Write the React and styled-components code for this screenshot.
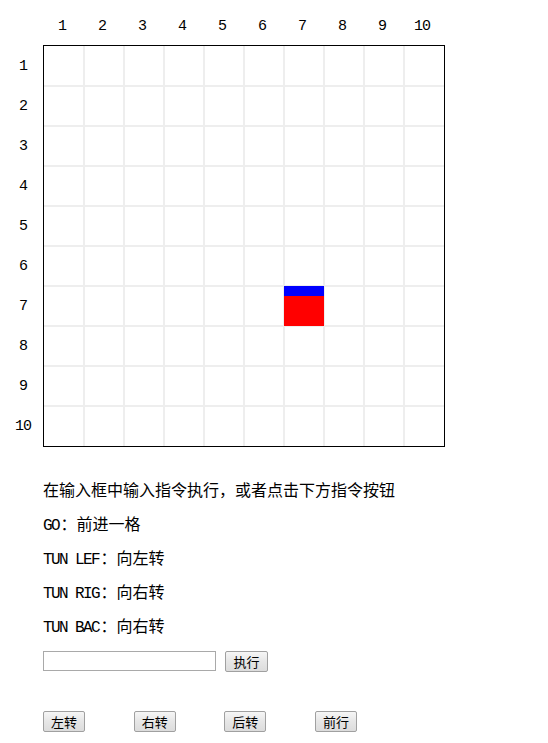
import React from "react";
import styled, { createGlobalStyle } from "styled-components";

const Global = createGlobalStyle`
  html, body { margin: 0; padding: 0; background: #fff; }
  body {
    margin: 8px;
    color: #000;
    font-family: "Noto Sans CJK SC", "Noto Sans", sans-serif;
    font-size: 16px;
  }
`;

const Page = styled.div`
  display: flex;
  flex-direction: column;
`;

const HeaderRow = styled.div`
  display: flex;
  height: 37px;
  align-items: center;
  padding-left: 34px;
`;

const HeaderCell = styled.div`
  width: 40px;
  text-align: center;
  font-family: "Liberation Mono", monospace;
  font-size: 15px;
  letter-spacing: -1px;
  line-height: 18px;
`;

const BoardRow = styled.div`
  display: flex;
`;

const RowLabels = styled.div`
  display: flex;
  flex-direction: column;
  width: 30px;
  margin-right: 5px;
  padding-top: 1px;
`;

const RowLabel = styled.div`
  height: 40px;
  display: flex;
  align-items: center;
  justify-content: center;
  font-family: "Liberation Mono", monospace;
  font-size: 15px;
  letter-spacing: -1px;
`;

const Board = styled.div`
  position: relative;
  display: grid;
  grid-template-columns: repeat(10, 40px);
  grid-template-rows: repeat(10, 40px);
  border: 1px solid #000;
  width: 400px;
  height: 400px;
`;

const Cell = styled.div`
  box-sizing: border-box;
  border-left: ${(p) => (p.$col > 0 ? "1px solid #eeeeee" : "none")};
  border-right: ${(p) => (p.$col < 9 ? "1px solid #eeeeee" : "none")};
  border-top: ${(p) => (p.$row > 0 ? "1px solid #eeeeee" : "none")};
  border-bottom: ${(p) => (p.$row < 9 ? "1px solid #eeeeee" : "none")};
`;

const Robot = styled.div`
  position: absolute;
  left: ${(p) => p.$col * 40}px;
  top: ${(p) => p.$row * 40}px;
  width: 40px;
  height: 40px;
  box-sizing: border-box;
  background: #ff0000;
  border-top: 10px solid #0000ff;
`;

const Info = styled.div`
  display: flex;
  flex-direction: column;
  gap: 16px;
  margin-top: 33px;
  padding-left: 35px;
`;

const Line = styled.div`
  line-height: 18px;
  height: 18px;
  white-space: nowrap;
`;

const Code = styled.span`
  font-family: "Liberation Mono", monospace;
  font-size: 16px;
  letter-spacing: -1.6px;
  margin-right: 1.6px;
`;

const InputRow = styled.div`
  display: flex;
  align-items: flex-start;
  gap: 9px;
  margin-top: 17px;
  padding-left: 35px;
`;

const CmdInput = styled.input`
  box-sizing: border-box;
  width: 173px;
  height: 20px;
  margin: 0;
  padding: 1px 3px;
  border: 1px solid #a9a9a9;
  font-size: 13px;
  outline: none;
`;

const Btn = styled.button`
  box-sizing: border-box;
  width: ${(p) => p.$w || 43}px;
  height: 21px;
  margin: 0;
  padding: 0;
  border: 1px solid #a0a0a0;
  border-radius: 2px;
  background: linear-gradient(#f6f6f6, #e6e6e6 50%, #dcdcdc);
  font-family: "Noto Sans CJK SC", sans-serif;
  font-size: 13px;
  line-height: 19px;
  color: #000;
`;

const ButtonRow = styled.div`
  display: flex;
  gap: 48.7px;
  margin-top: 39px;
  padding-left: 35px;
`;

const nums = Array.from({ length: 10 }, (_, i) => i);

export default function App() {
  return (
    <Page>
      <Global />
      <HeaderRow>
        {nums.map((i) => (
          <HeaderCell key={i}>{i + 1}</HeaderCell>
        ))}
      </HeaderRow>
      <BoardRow>
        <RowLabels>
          {nums.map((i) => (
            <RowLabel key={i}>{i + 1}</RowLabel>
          ))}
        </RowLabels>
        <Board>
          {nums.map((r) =>
            nums.map((c) => <Cell key={`${r}-${c}`} $row={r} $col={c} />)
          )}
          <Robot $row={6} $col={6} />
        </Board>
      </BoardRow>
      <Info>
        <Line>在输入框中输入指令执行，或者点击下方指令按钮</Line>
        <Line>
          <Code>GO</Code>：前进一格
        </Line>
        <Line>
          <Code>TUN LEF</Code>：向左转
        </Line>
        <Line>
          <Code>TUN RIG</Code>：向右转
        </Line>
        <Line>
          <Code>TUN BAC</Code>：向右转
        </Line>
      </Info>
      <InputRow>
        <CmdInput type="text" />
        <Btn>执行</Btn>
      </InputRow>
      <ButtonRow>
        <Btn $w={42}>左转</Btn>
        <Btn $w={42}>右转</Btn>
        <Btn $w={42}>后转</Btn>
        <Btn $w={42}>前行</Btn>
      </ButtonRow>
    </Page>
  );
}
